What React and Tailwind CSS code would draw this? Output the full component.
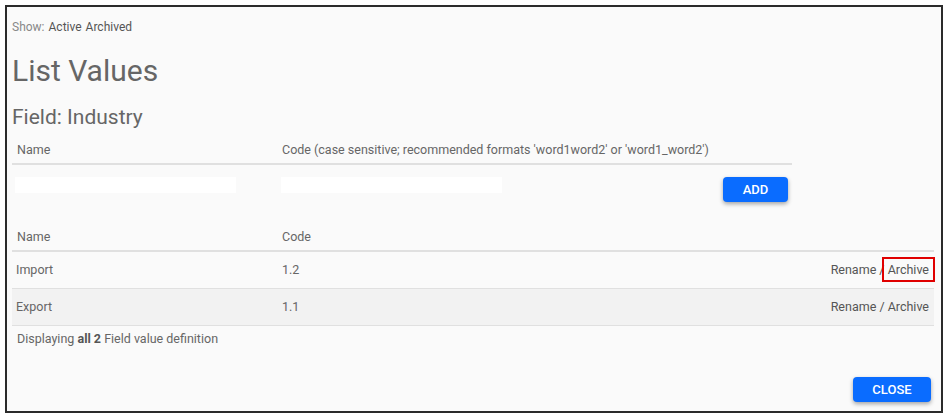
import React from "react";

export default function App() {
  const font = { fontFamily: "Roboto, 'Liberation Sans', sans-serif" };
  return (
    <div className="w-[947px] h-[416px] bg-white pt-[5px] pl-[5px]" style={font}>
      <div className="w-[938px] h-[408px] border-2 border-[#2b2b2b] bg-[#fafafa] flex flex-col px-[5px] text-[#666]">
        <div className="h-[39px] flex items-center text-[12px]">
          <span className="text-[#888]">Show:</span>
          <span className="ml-1 text-[#555]">Active</span>
          <span className="ml-1 text-[#555]">Archived</span>
        </div>
        <div className="h-[50px] flex items-center text-[30px] text-[#666] leading-none">List Values</div>
        <div className="h-[42px] flex items-center text-[21px] text-[#666] leading-none">Field: Industry</div>

        <div className="w-[780px] flex flex-col text-[12.5px]">
          <div className="h-[27px] flex items-center border-b-2 border-[#e0e0e0]">
            <div className="w-[265px] pl-[5px]">Name</div>
            <div className="pl-[5px]">Code (case sensitive; recommended formats 'word1word2' or 'word1_word2')</div>
          </div>
          <div className="h-[59px] flex items-start pt-[12px]">
            <div className="w-[265px] pl-[3px]">
              <div className="w-[221px] h-[16px] bg-white"></div>
            </div>
            <div className="w-[265px] pl-[4px]">
              <div className="w-[221px] h-[16px] bg-white"></div>
            </div>
            <div className="flex-1 flex justify-end pr-[4px]">
              <button className="w-[65px] h-[25px] rounded-[4px] bg-[#0a6cff] text-white text-[13px] font-medium shadow-[0_2px_4px_rgba(0,0,0,0.35)]">ADD</button>
            </div>
          </div>
        </div>

        <div className="w-[922px] flex flex-col text-[12.5px]">
          <div className="h-[28px] flex items-center border-b-2 border-[#e0e0e0]">
            <div className="w-[265px] pl-[5px]">Name</div>
            <div className="pl-[5px]">Code</div>
          </div>
          <div className="h-[37px] flex items-center border-b border-[#e0e0e0]">
            <div className="w-[265px] pl-[4px]">Import</div>
            <div className="flex-1 pl-[5px]">1.2</div>
            <div className="pr-[5px] text-[#555]">
              Rename /{" "}
              <span className="relative">
                Archive
                <span className="absolute -left-[6px] -right-[6px] -top-[5px] -bottom-[5px] border-2 border-[#e00000]"></span>
              </span>
            </div>
          </div>
          <div className="h-[37px] flex items-center border-b border-[#e0e0e0] bg-[#f2f2f2]">
            <div className="w-[265px] pl-[4px]">Export</div>
            <div className="flex-1 pl-[5px]">1.1</div>
            <div className="pr-[5px] text-[#555]">Rename / Archive</div>
          </div>
          <div className="h-[26px] flex items-center pl-[5px]">
            Displaying&nbsp;<b className="font-bold text-[#555]">all 2</b>&nbsp;Field value definition
          </div>
        </div>

        <div className="flex-1 flex items-end justify-end pb-[9px] pr-[5px]">
          <button className="w-[78px] h-[25px] rounded-[4px] bg-[#0a6cff] text-white text-[13px] font-medium shadow-[0_2px_4px_rgba(0,0,0,0.35)]">CLOSE</button>
        </div>
      </div>
    </div>
  );
}
